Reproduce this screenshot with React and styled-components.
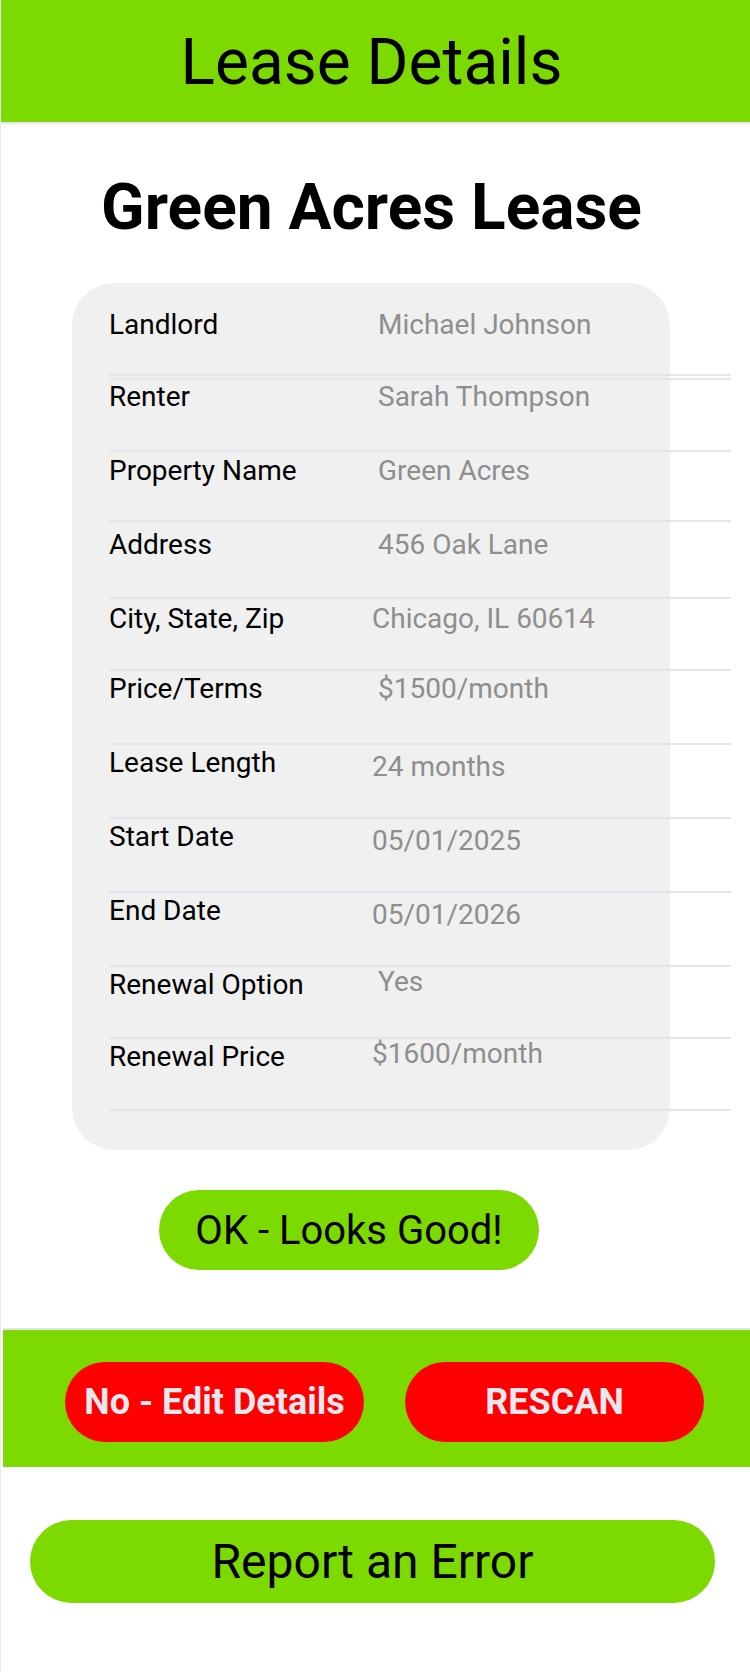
import React from 'react';
import styled, { createGlobalStyle } from 'styled-components';

const GlobalStyle = createGlobalStyle`
  * { box-sizing: border-box; }
  body {
    margin: 0;
    background: #ffffff;
    font-family: Roboto, "Liberation Sans", Arial, sans-serif;
  }
`;

const Page = styled.div`
  width: 750px;
  min-height: 1672px;
  border-left: 1px solid #ececec;
  display: flex;
  flex-direction: column;
`;

const Header = styled.header`
  height: 124px;
  background-color: #7cda00;
  border-bottom: 2px solid #e5e5ea;
  display: flex;
  align-items: center;
  justify-content: center;
  padding: 2px 8px 0 0;
`;

const HeaderTitle = styled.h1`
  margin: 0;
  font-size: 64px;
  font-weight: 400;
  color: #000;
`;

const Main = styled.main`
  display: flex;
  flex-direction: column;
  align-items: center;
  padding-right: 8px;
`;

const LeaseTitle = styled.h2`
  margin: 46px 0 0;
  font-size: 64px;
  font-weight: 700;
  line-height: 75px;
  color: #000;
`;

const Card = styled.section`
  margin-top: 38px;
  align-self: flex-start;
  margin-left: 71px;
  width: 598px;
  background-color: #f0f0f0;
  border-radius: 42px;
  padding: 24px 0 39px 37px;
`;

const Row = styled.div`
  width: 622px;
  height: ${p => p.$h}px;
  display: flex;
  align-items: flex-start;
  padding-top: ${p => p.$pt}px;
  border-bottom: 2px solid #e4e4ea;
`;

const ExtraRule = styled.div`
  width: 622px;
  height: 2px;
  margin-top: 2px;
  background-color: #e4e4ea;
`;

const Label = styled.span`
  width: ${p => (p.$indent ? 269 : 263)}px;
  flex-shrink: 0;
  font-size: 28px;
  line-height: 30px;
  color: #000;
`;

const Value = styled.span`
  margin-top: ${p => p.$shift || 0}px;
  font-size: 28px;
  line-height: 30px;
  color: #8e8e8e;
`;

const OkButton = styled.button`
  margin: 40px 0 0;
  align-self: flex-start;
  margin-left: 158px;
  width: 380px;
  height: 80px;
  border: none;
  border-radius: 40px;
  background-color: #7cda00;
  color: #000;
  font-family: inherit;
  font-size: 40px;
  padding: 0;
`;

const ActionBar = styled.div`
  margin: 58px 0 0 2px;
  height: 139px;
  border-top: 2px solid #e5e5ea;
  background-color: #7cda00;
  display: flex;
  gap: 41px;
  padding: 32px 0 0 62px;
`;

const RedButton = styled.button`
  width: 299px;
  height: 80px;
  border: none;
  border-radius: 40px;
  background-color: #ff0000;
  color: #e8e8ee;
  font-family: inherit;
  font-weight: 700;
  font-size: 36px;
  padding: 0;
`;

const ReportButton = styled.button`
  margin: 53px 0 0 29px;
  width: 685px;
  height: 83px;
  border: none;
  border-radius: 42px;
  background-color: #7cda00;
  color: #000;
  font-family: inherit;
  font-size: 48px;
  padding: 0;
`;

const rows = [
  { label: 'Landlord', value: 'Michael Johnson', h: 69, pt: 3, indent: true },
  { label: 'Renter', value: 'Sarah Thompson', h: 72, pt: 2, indent: true },
  { label: 'Property Name', value: 'Green Acres', h: 70, pt: 4, indent: true },
  { label: 'Address', value: '456 Oak Lane', h: 77, pt: 8, indent: true },
  { label: 'City, State, Zip', value: 'Chicago, IL 60614', h: 72, pt: 5 },
  { label: 'Price/Terms', value: '$1500/month', h: 74, pt: 3, indent: true },
  { label: 'Lease Length', value: '24 months', h: 74, pt: 3, shift: 4 },
  { label: 'Start Date', value: '05/01/2025', h: 74, pt: 3, shift: 4 },
  { label: 'End Date', value: '05/01/2026', h: 74, pt: 3, shift: 4 },
  { label: 'Renewal Option', value: 'Yes', h: 72, pt: 3, indent: true, shift: -3 },
  { label: 'Renewal Price', value: '$1600/month', h: 72, pt: 3, shift: -3 },
];

export default function App() {
  return (
    <>
      <GlobalStyle />
      <Page>
        <Header>
          <HeaderTitle>Lease Details</HeaderTitle>
        </Header>
        <Main>
          <LeaseTitle>Green Acres Lease</LeaseTitle>
          <Card>
            {rows.map((r, i) => (
              <React.Fragment key={r.label}>
                <Row $h={r.h} $pt={r.pt}>
                  <Label $indent={r.indent}>{r.label}</Label>
                  <Value $shift={r.shift}>{r.value}</Value>
                </Row>
                {i === 0 && <ExtraRule />}
              </React.Fragment>
            ))}
          </Card>
          <OkButton>OK - Looks Good!</OkButton>
        </Main>
        <ActionBar>
          <RedButton>No - Edit Details</RedButton>
          <RedButton>RESCAN</RedButton>
        </ActionBar>
        <ReportButton>Report an Error</ReportButton>
      </Page>
    </>
  );
}
